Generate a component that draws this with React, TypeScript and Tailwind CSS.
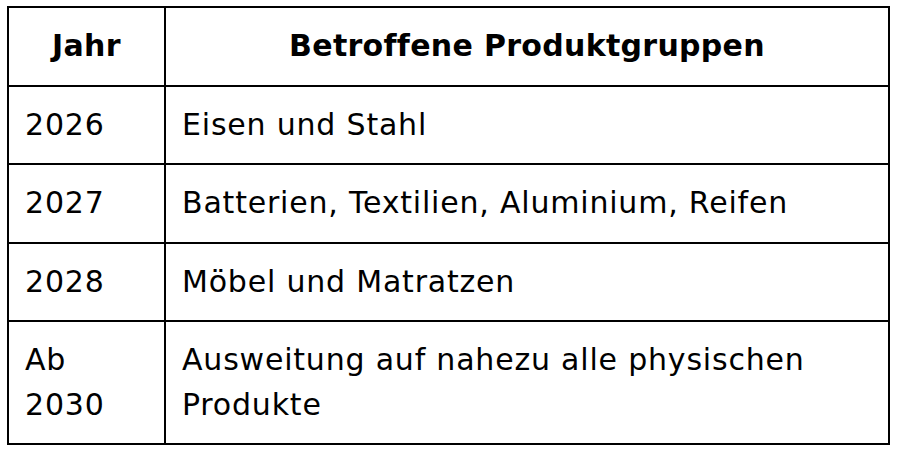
const rows = [
  { year: '2026', groups: 'Eisen und Stahl' },
  { year: '2027', groups: 'Batterien, Textilien, Aluminium, Reifen' },
  { year: '2028', groups: 'Möbel und Matratzen' },
  { year: 'Ab 2030', groups: 'Ausweitung auf nahezu alle physischen Produkte' },
];

export default function App() {
  return (
    <div className="min-h-screen bg-white pl-[7px] pt-[6px]" style={{ fontFamily: '"DejaVu Sans", Inter, sans-serif' }}>
      <table className="w-[883px] table-fixed border-collapse text-[30px] leading-[44.5px] text-black">
        <colgroup>
          <col className="w-[157px]" />
          <col />
        </colgroup>
        <thead>
          <tr>
            <th className="border-2 border-black px-4 py-4 text-center font-bold tracking-[0.3px]">Jahr</th>
            <th className="border-2 border-black px-4 py-4 text-center font-bold tracking-[0.3px]">Betroffene Produktgruppen</th>
          </tr>
        </thead>
        <tbody>
          {rows.map((r) => (
            <tr key={r.year}>
              <td className="border-2 border-black px-4 py-4 align-top tracking-[0.8px]">{r.year}</td>
              <td className="border-2 border-black px-4 py-4 align-top tracking-[0.8px]">{r.groups}</td>
            </tr>
          ))}
        </tbody>
      </table>
    </div>
  );
}
